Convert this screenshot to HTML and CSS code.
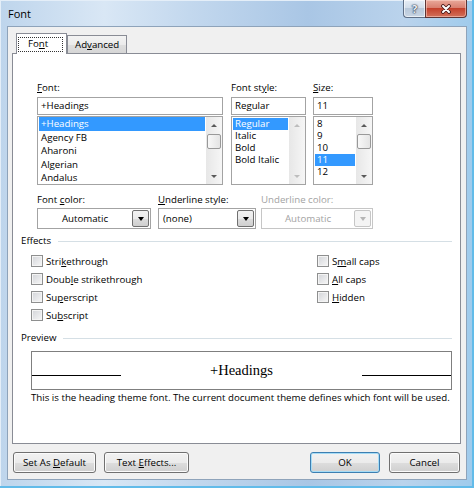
FILE: index.html
```html
<!DOCTYPE html>
<html>

<head>
    <title>Font</title>

    <link rel="stylesheet" href="styles.css">
</head>

<body>
    <div class="window">
        <div class="titlebar">
            <span class="title">Font</span>
            <div class="caption-btns">
                <span class="cap-help">?</span>
                <span class="cap-close">
                    <svg width="12" height="10" viewBox="0 0 12 10">
                        <path d="M3 2 L9 8 M9 2 L3 8" stroke="#4a1c1c" stroke-width="3.8" stroke-linecap="round" />
                        <path d="M3 2 L9 8 M9 2 L3 8" stroke="#ffffff" stroke-width="2" stroke-linecap="round" />
                    </svg>
                </span>
            </div>
        </div>

        <div class="client">
            <div class="tabs">
                <div class="tab active"><span class="focus">Fo<u>n</u>t</span></div>
                <div class="tab">Ad<u>v</u>anced</div>
            </div>

            <div class="panel">
                <div class="pickers">
                    <div class="picker picker-font">
                        <div class="label"><u>F</u>ont:</div>
                        <div class="textbox">+Headings</div>
                        <div class="listbox">
                            <ul class="items items-font">
                                <li class="selected">+Headings</li>
                                <li>Agency FB</li>
                                <li>Aharoni</li>
                                <li>Algerian</li>
                                <li>Andalus</li>
                            </ul>
                            <div class="scrollbar">
                                <span class="sb-btn"><i class="arrow-up"></i></span>
                                <span class="sb-track"><span class="sb-thumb"></span></span>
                                <span class="sb-btn"><i class="arrow-down"></i></span>
                            </div>
                        </div>
                    </div>

                    <div class="picker picker-style">
                        <div class="label">Font st<u>y</u>le:</div>
                        <div class="textbox">Regular</div>
                        <div class="listbox">
                            <ul class="items">
                                <li class="selected">Regular</li>
                                <li>Italic</li>
                                <li>Bold</li>
                                <li>Bold Italic</li>
                            </ul>
                            <div class="scrollbar disabled">
                                <span class="sb-btn"><i class="arrow-up"></i></span>
                                <span class="sb-track"></span>
                                <span class="sb-btn"><i class="arrow-down"></i></span>
                            </div>
                        </div>
                    </div>

                    <div class="picker picker-size">
                        <div class="label"><u>S</u>ize:</div>
                        <div class="textbox">11</div>
                        <div class="listbox">
                            <ul class="items">
                                <li>8</li>
                                <li>9</li>
                                <li>10</li>
                                <li class="selected">11</li>
                                <li>12</li>
                            </ul>
                            <div class="scrollbar">
                                <span class="sb-btn"><i class="arrow-up"></i></span>
                                <span class="sb-track"><span class="sb-thumb"></span></span>
                                <span class="sb-btn"><i class="arrow-down"></i></span>
                            </div>
                        </div>
                    </div>
                </div>

                <div class="combos">
                    <div class="combo-field combo-color">
                        <div class="label">Font <u>c</u>olor:</div>
                        <div class="combo">
                            <span class="combo-text center">Automatic</span>
                            <span class="combo-btn"><i class="arrow-down"></i></span>
                        </div>
                    </div>
                    <div class="combo-field combo-underline">
                        <div class="label"><u>U</u>nderline style:</div>
                        <div class="combo">
                            <span class="combo-text">(none)</span>
                            <span class="combo-btn"><i class="arrow-down"></i></span>
                        </div>
                    </div>
                    <div class="combo-field combo-ucolor disabled">
                        <div class="label">Underline color:</div>
                        <div class="combo">
                            <span class="combo-text center">Automatic</span>
                            <span class="combo-btn"><i class="arrow-down"></i></span>
                        </div>
                    </div>
                </div>

                <div class="group-title"><span>Effects</span></div>
                <div class="effects">
                    <div class="effects-col effects-left">
                        <div class="check"><span class="box"></span>Stri<u>k</u>ethrough</div>
                        <div class="check"><span class="box"></span>Doub<u>l</u>e strikethrough</div>
                        <div class="check"><span class="box"></span>Su<u>p</u>erscript</div>
                        <div class="check"><span class="box"></span>Su<u>b</u>script</div>
                    </div>
                    <div class="effects-col">
                        <div class="check"><span class="box"></span>S<u>m</u>all caps</div>
                        <div class="check"><span class="box"></span><u>A</u>ll caps</div>
                        <div class="check"><span class="box"></span><u>H</u>idden</div>
                    </div>
                </div>

                <div class="group-title preview-title"><span>Preview</span></div>
                <div class="preview">
                    <span class="preview-line"></span>
                    <span class="preview-text">+Headings</span>
                    <span class="preview-line"></span>
                </div>
                <div class="preview-note">This is the heading theme font. The current document theme defines which font will be used.</div>
            </div>

            <div class="buttons">
                <button class="btn btn-default">Set As <u>D</u>efault</button>
                <button class="btn btn-effects">Text <u>E</u>ffects...</button>
                <button class="btn btn-ok">OK</button>
                <button class="btn btn-cancel">Cancel</button>
            </div>
        </div>
    </div>
</body>

</html>
```

FILE: styles.css
```css
* {
    box-sizing: border-box;
}

body {
    margin: 0;
    font-family: 'Open Sans', 'Segoe UI', sans-serif;
    font-size: 9.7px;
    color: #000;
    background-color: #5cb8e8;
}

u {
    text-decoration-thickness: 1px;
    text-underline-offset: 1px;
}

.window {
    width: 474px;
    height: 488px;
    padding: 0 7px 8px 7px;
    display: flex;
    flex-direction: column;
    background: linear-gradient(to right, #bed5ec 0%, #d9e7f5 22%, #c3d8ee 40%, #a9c6e5 65%, #bad3ec 85%, #9fcbec 100%);
    box-shadow: inset -2px -2px 0 #62bbe9, inset 1px 1px 0 #e4eef8;
}

.titlebar {
    height: 26px;
    display: flex;
    justify-content: space-between;
    align-items: flex-start;
}

.title {
    font-size: 11px;
    line-height: 28px;
    padding-left: 1px;
}

.caption-btns {
    display: flex;
    height: 18px;
}

.cap-help {
    width: 22px;
    height: 18px;
    border: 1px solid #5f6f86;
    border-top: none;
    border-right: none;
    border-radius: 0 0 0 4px;
    background: linear-gradient(#e6edf5 0%, #d3deea 45%, #b8c8da 50%, #c9d6e4 100%);
    box-shadow: inset 0 0 0 1px rgba(255, 255, 255, 0.6);
    color: #eef2f6;
    font-weight: bold;
    font-size: 11px;
    line-height: 17px;
    text-align: center;
    text-shadow: 0 0 1px #2e3c52, 0 0 1px #2e3c52, 0 0 2px #2e3c52;
}

.cap-close {
    width: 42px;
    height: 18px;
    border: 1px solid #5e3535;
    border-top: none;
    border-radius: 0 0 4px 0;
    background: linear-gradient(#e9a99a 0%, #d98070 45%, #c4412c 50%, #d2705a 100%);
    box-shadow: inset 0 0 0 1px rgba(255, 220, 210, 0.5);
    display: flex;
    align-items: center;
    justify-content: center;
}

.client {
    flex: 1;
    background-color: #f0f0f0;
    border: 1px solid #8ea3ba;
    padding: 6px 6px 0 4px;
}

/* tabs */
.tabs {
    height: 20px;
    display: flex;
    align-items: flex-end;
    padding-left: 4px;
}

.tab {
    height: 18px;
    padding: 1px 7px 0;
    line-height: 15px;
    border: 1px solid #898c95;
    border-bottom: none;
    background: linear-gradient(#f3f3f3 0%, #ebebeb 50%, #dedede 51%, #d6d6d6 100%);
}

.tab.active {
    position: relative;
    z-index: 1;
    height: 21px;
    margin-bottom: -1px;
    width: 51px;
    padding: 3px 0 0 1px;
    background: #fff;
    line-height: 12px;
}

.focus {
    display: block;
    width: 45px;
    padding: 0 0 1px 9px;
    border: 1px dotted #333;
}

.panel {
    width: 449px;
    height: 391px;
    background-color: #fff;
    border: 1px solid #898c95;
    padding: 27px 8px 0;
}

.label {
    height: 14px;
    line-height: 14px;
    margin-bottom: 2px;
}

/* font / style / size pickers */
.pickers {
    display: flex;
    margin-left: 16px;
}

.picker-font {
    width: 186px;
}

.picker-style {
    width: 75px;
    margin-left: 8px;
}

.picker-size {
    width: 60px;
    margin-left: 7px;
}

.textbox {
    height: 18px;
    border: 1px solid #a3a3a3;
    padding-left: 3px;
    line-height: 16px;
}

.listbox {
    margin-top: 1px;
    height: 69px;
    border: 1px solid #a3a3a3;
    display: flex;
}

.items {
    flex: 1;
    list-style: none;
    margin: 0;
    padding: 1px 1px 0;
    line-height: 12px;
    overflow: hidden;
}

.items li {
    padding-left: 2px;
    height: 12px;
}

.items-font {
    padding-top: 0;
    line-height: 13.5px;
}

.items-font li {
    height: 13.5px;
}

.items li.selected {
    background-color: #3399ff;
    color: #fff;
}

.scrollbar {
    width: 16px;
    display: flex;
    flex-direction: column;
    background: linear-gradient(to right, #e7e7e7, #f6f6f6);
}

.sb-btn {
    height: 16px;
    display: flex;
    align-items: center;
    justify-content: center;
}

.sb-track {
    flex: 1;
}

.sb-thumb {
    display: block;
    height: 15px;
    margin: 1px 1px 0;
    border: 1px solid #999;
    border-radius: 2px;
    background: linear-gradient(to right, #f8f8f8, #e4e4e4);
}

.arrow-up,
.arrow-down {
    width: 0;
    height: 0;
    border-left: 3px solid transparent;
    border-right: 3px solid transparent;
}

.arrow-up {
    border-bottom: 3px solid #5a5a5a;
}

.arrow-down {
    border-top: 3px solid #5a5a5a;
}

.scrollbar.disabled .arrow-up {
    border-bottom-color: #bdbdbd;
}

.scrollbar.disabled .arrow-down {
    border-top-color: #bdbdbd;
}

/* dropdowns */
.combos {
    display: flex;
    margin: 8px 0 0 16px;
}

.combos .label {
    margin-bottom: 1px;
}

.combo-color {
    width: 114px;
}

.combo-underline {
    width: 98px;
    margin-left: 7px;
}

.combo-ucolor {
    width: 112px;
    margin-left: 5px;
}

.combo {
    height: 21px;
    border: 1px solid #a3a3a3;
    background: #fff;
    display: flex;
    align-items: center;
    padding-right: 1px;
}

.combo-text {
    flex: 1;
    padding-left: 4px;
}

.combo-text.center {
    text-align: center;
    padding-left: 0;
}

.combo-btn {
    width: 17px;
    height: 17px;
    border: 1px solid #707070;
    border-radius: 2px;
    background: linear-gradient(#f2f2f2 0%, #ebebeb 50%, #dddddd 51%, #cfcfcf 100%);
    display: flex;
    align-items: center;
    justify-content: center;
}

.combo-btn .arrow-down {
    border-left-width: 3.5px;
    border-right-width: 3.5px;
    border-top: 4px solid #000;
}

.disabled .label,
.disabled .combo-text {
    color: #a3a3a3;
}

.disabled .combo {
    border-color: #c6c6c6;
}

.disabled .combo-btn {
    border-color: #c6c6c6;
    background: #f4f4f4;
}

.disabled .combo-btn .arrow-down {
    border-top-color: #b5b5b5;
}

/* group headings */
.group-title {
    margin-top: 5px;
    height: 14px;
    line-height: 14px;
    display: flex;
    align-items: center;
}

.group-title::after {
    content: '';
    flex: 1;
    margin-left: 7px;
    border-top: 1px solid #d5dfe5;
}

.preview-title {
    margin-top: 7px;
}

/* effects */
.effects {
    display: flex;
    margin-top: 4px;
}

.effects-left {
    width: 296px;
    padding-left: 10px;
}

.check {
    height: 18px;
    display: flex;
    align-items: center;
}

.box {
    width: 12px;
    height: 12px;
    margin-right: 3px;
    border: 1px solid #8e8f8f;
    background: linear-gradient(135deg, #d2d4d8, #f7f7f7);
    box-shadow: inset 0 0 0 1px #f4f4f4;
}

/* preview */
.preview {
    margin: 6px 0 0 10px;
    width: 421px;
    height: 39px;
    border: 1px solid #7f7f7f;
    display: flex;
    align-items: center;
    justify-content: space-between;
}

.preview-line {
    width: 89px;
    height: 1px;
    margin-top: 10px;
    background-color: #000;
}

.preview-text {
    font-family: 'Liberation Serif', serif;
    font-size: 14.5px;
}

.preview-note {
    margin: 1px 0 0 10px;
    line-height: 14px;
    white-space: nowrap;
}

/* bottom buttons */
.buttons {
    display: flex;
    margin-top: 8px;
    padding-left: 1px;
}

.btn {
    height: 21px;
    padding: 0;
    font-family: inherit;
    font-size: inherit;
    color: #000;
    border: 1px solid #707070;
    border-radius: 3px;
    background: linear-gradient(#f2f2f2 0%, #ebebeb 50%, #dddddd 51%, #cfcfcf 100%);
    box-shadow: inset 0 0 0 1px #fbfbfb;
}

.btn-default {
    width: 83px;
}

.btn-effects {
    width: 85px;
    margin-left: 8px;
}

.btn-ok {
    width: 70px;
    margin-left: auto;
    border-color: #3c7fb1;
    box-shadow: inset 0 0 0 1px #a6dcf6;
}

.btn-cancel {
    width: 71px;
    margin-left: 9px;
}
```
